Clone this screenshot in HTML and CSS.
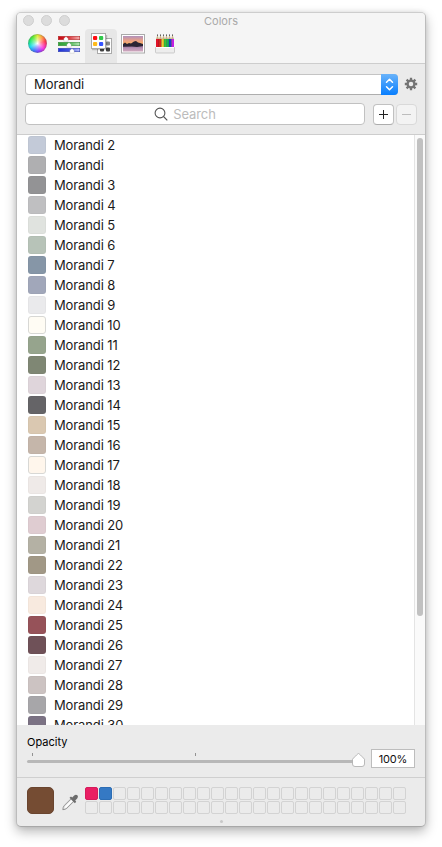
FILE: index.html
```html
<!DOCTYPE html>
<html lang="en">
<head>
<meta charset="utf-8">
<title>Colors</title>
<link rel="stylesheet" href="styles.css">
</head>
<body>
<main class="window">
  <header class="titlebar">
    <div class="title-row">
      <div class="lights"><i></i><i></i><i></i></div>
      <h1>Colors</h1>
    </div>
    <nav class="tabs">
      <div class="tab"><span class="wheel"></span></div>
      <div class="tab">
        <svg width="24" height="22" viewBox="0 0 24 22">
          <defs>
            <linearGradient id="r"><stop offset="0" stop-color="#c80812"/><stop offset=".4" stop-color="#d62028"/><stop offset="1" stop-color="#f4b4b2"/></linearGradient>
            <linearGradient id="g"><stop offset="0" stop-color="#2f9e38"/><stop offset=".5" stop-color="#45b44c"/><stop offset="1" stop-color="#b8e6b8"/></linearGradient>
            <linearGradient id="b"><stop offset="0" stop-color="#2033d4"/><stop offset=".5" stop-color="#4254e0"/><stop offset="1" stop-color="#b8c0fa"/></linearGradient>
          </defs>
          <rect x="1.300" y="3.300" width="21.400" height="3.400" fill="url(#r)" stroke="#b32c2c" stroke-width=".6"/>
          <rect x="1.300" y="9.300" width="21.400" height="3.400" fill="url(#g)" stroke="#3c9040" stroke-width=".6"/>
          <rect x="1.300" y="15.300" width="21.400" height="3.400" fill="url(#b)" stroke="#3444b4" stroke-width=".6"/>
          <g fill="#fff" stroke="#777" stroke-opacity=".5" stroke-width=".4"><path d="M9 3.500l2.200 2V8.200H6.800V5.500z"/><path d="M12 9.500l2.200 2v2.700H9.800v-2.700z"/><path d="M15 15.500l2.200 2v2.700h-4.400v-2.700z"/></g>
        </svg>
      </div>
      <div class="tab selected">
        <svg width="24" height="24" viewBox="0 0 24 24">
          <rect x="8.500" y="5.500" width="14" height="15" fill="#fff" stroke="#aaa"/>
          <g fill="#444"><rect x="11" y="14.500" width="4" height="4" rx="1"/><rect x="17" y="14.500" width="4" height="4" rx="1"/><rect x="17" y="8.500" width="4" height="4" rx="1" fill="#888"/></g>
          <path d="M3 16.500h14.500V2" fill="none" stroke="#000" stroke-opacity=".2" stroke-width="1.500"/>
          <rect x="2.500" y=".5" width="14" height="15" fill="#fff" stroke="#aaa"/>
          <rect x="4" y="3" width="4.200" height="4" rx="1" fill="#ff0d12"/><rect x="10" y="3" width="4.200" height="4" rx="1" fill="#2fc84b"/>
          <rect x="4" y="9" width="4.200" height="4" rx="1" fill="#ffbb1c"/><rect x="10" y="9" width="4.200" height="4" rx="1" fill="#3453ff"/>
        </svg>
      </div>
      <div class="tab">
        <svg width="24" height="22" viewBox="0 0 24 22">
          <defs><linearGradient id="sky" x2="0" y2="1"><stop offset="0" stop-color="#b092bd"/><stop offset=".5" stop-color="#eaa087"/><stop offset="1" stop-color="#ffb45c"/></linearGradient>
          <linearGradient id="sea" x2="0" y2="1"><stop offset="0" stop-color="#75567f"/><stop offset=".45" stop-color="#b891b4"/><stop offset="1" stop-color="#d0a8bd"/></linearGradient></defs>
          <rect x=".5" y="1.500" width="23" height="18.500" fill="#fff" stroke="#aaa"/>
          <rect x="2" y="3" width="20" height="9" fill="url(#sky)"/><rect x="2" y="12" width="20" height="6.500" fill="url(#sea)"/>
          <path d="M2 11l2-1.500 2 1.500 2-1 2 .5 3-2 2-.5 2 1.500 2 .5 3 1v2l-6 1-5-.5-9 .3z" fill="#2b2434"/>
        </svg>
      </div>
      <div class="tab">
        <svg width="22" height="22" viewBox="0 0 22 22">
          <g>
            <path d="M2 14V6l1.500-4L5 6l1.500-4L8 6l1.500-4L11 6l1.500-4L14 6l1.500-4L17 6l1.500-4L20 6v8z" fill="#cbb489"/>
            <rect x="2" y="6" width="3" height="9" fill="#e11428"/><rect x="5" y="6" width="2.500" height="9" fill="#d92a1c"/>
            <rect x="7.500" y="6" width="2.500" height="9" fill="#e8d032"/><rect x="10" y="6" width="2.700" height="9" fill="#35c43d"/>
            <rect x="12.700" y="6" width="2.300" height="9" fill="#12b45c"/><rect x="15" y="6" width="2.500" height="9" fill="#1940cb"/><rect x="17.500" y="6" width="2.500" height="9" fill="#c21fe4"/>
            <path d="M4.700 6v8M7.300 6v8M9.900 6v8M12.500 6v8M15 6v8M17.500 6v8" stroke="#222" stroke-opacity=".4" stroke-width=".6"/>
            <path d="M3.500 1.500v1.300M6.500 1.500v1.300M9.500 1.500v1.300M12.500 1.500v1.300M15.500 1.500v1.300M18.500 1.500v1.300" stroke="#444"/>
          </g>
          <path d="M1.500 14.500h19v4.500q0 1-1 1h-17q-1 0-1-1z" fill="#ededed" stroke="#bbb" stroke-width=".7"/><path d="M2 14.500h18" stroke="#fff"/>
        </svg>
      </div>
    </nav>
  </header>

  <section class="controls">
    <div class="control-row">
      <div class="select"><span>Morandi</span>
        <b><svg width="17" height="21" viewBox="0 0 17 21" fill="none" stroke="#fff" stroke-width="1.500" stroke-linecap="round" stroke-linejoin="round"><path d="M5.500 8.300l3-3 3 3M5.500 12.700l3 3 3-3"/></svg></b>
      </div>
      <svg class="gear" width="14" height="14" viewBox="-7 -7 14 14"><g stroke="#747474" stroke-width="2.300"><path d="M0-6.200V-3M0 6.200V3M-6.200 0H-3M6.200 0H3M-4.400-4.400l2.300 2.300M4.400 4.400L2.100 2.100M-4.400 4.400l2.300-2.300M4.400-4.400L2.100-2.100"/></g><circle r="3.400" fill="none" stroke="#747474" stroke-width="2.300"/></svg>
    </div>
    <div class="control-row">
      <div class="search">
        <svg width="14" height="14" viewBox="0 0 14 14" fill="none" stroke="#555" stroke-width="1.100"><circle cx="6" cy="6" r="4.900"/><path d="M9.500 9.500l3.800 3.800"/></svg>
        <span>Search</span>
      </div>
      <div class="button add"><svg width="9" height="9" viewBox="0 0 9 9"><path d="M4.500 0v9M0 4.500h9" stroke="#222"/></svg></div>
      <div class="button remove"><svg width="9" height="9" viewBox="0 0 9 9"><path d="M0 4.500h9" stroke="#bdbdbd"/></svg></div>
    </div>
  </section>

  <section class="list">
    <ul id="colors"></ul>
    <div class="gutter"><div class="thumb"></div></div>
  </section>

  <section class="opacity">
    <div class="slider">
      <label>Opacity</label>
      <div class="ticks"><i></i><i></i></div>
      <div class="track">
        <svg class="knob" width="15" height="16" viewBox="0 0 15 16"><path d="M7.500 1.500Q8.200 1.500 13.500 7.200V12q0 2.500-2.500 2.500H4Q1.500 14.500 1.500 12V7.200Q6.800 1.500 7.500 1.500z" fill="#fff" stroke="#aaa" stroke-width=".8"/></svg>
      </div>
    </div>
    <div class="percent">100%</div>
  </section>

  <footer class="footer">
    <div class="wells">
      <div class="current"></div>
      <svg class="picker" width="19" height="20" viewBox="0 0 19 20">
        <path d="M10.300 6.500L3.200 13.600Q2 15 1.800 17.700q2.600-.2 4-1.400L13 9.200z" fill="#e8e8e8" stroke="#888" stroke-width=".9"/>
        <path d="M4.200 15.500l7-7" stroke="#fff" stroke-width="1.200"/>
        <path d="M8.500 5.800l1.500-1.300 1.200 1 2-2q1.700-1.500 3.200-.2 1.300 1.500-.2 3.200l-2 2 1 1.200-1.300 1.500z" fill="#6c6c6c"/>
      </svg>
      <div class="cells" id="cells"></div>
    </div>
    <div class="grip"></div>
  </footer>
</main>
<script src="app.js"></script>
</body>
</html>
```
FILE: styles.css
```css
* { box-sizing: border-box; }
html { height: 100%; }
body { margin: 0; min-height: 847px; display: flow-root; background: #fff; font-family: Inter, "Liberation Sans", sans-serif; color: #1a1a1a; }
svg { display: block; flex: none; }
.window {
  width: 410px; height: 815px; margin: 12px 16px 0; display: flex; flex-direction: column;
  border: 1px solid #bcbcbc; border-top-color: #cdcdcd; border-bottom-color: #a8a8a8; border-radius: 5px; overflow: hidden; background: #ebebeb;
  box-shadow: 0 5px 12px rgba(0,0,0,.27), 0 0 5px rgba(0,0,0,.1);
}
.titlebar { height: 51px; flex: none; background: #f5f5f5; border-bottom: 1px solid #cdcdcd; }
.title-row { height: 16px; display: grid; grid-template-columns: 60px 1fr 60px; align-items: center; }
.lights { display: flex; gap: 7px; padding-left: 6px; margin-top: -1px; }
.lights i { width: 11px; height: 11px; flex: none; border-radius: 50%; background: #dcdcdc; border: 1px solid #cecece; }
h1 { margin: 0; text-align: center; font-size: 11px; font-weight: 400; color: #a9a9a9; line-height: 16px; letter-spacing: .05px; }
.tabs { display: flex; padding-left: 4px; height: 34px; }
.tab { width: 32px; height: 34px; display: flex; justify-content: center; padding-top: 4px; flex: none; }
.tab.selected { background: #e7e7e7; border-radius: 4px 4px 0 0; }
.wheel {
  width: 19px; height: 19px; margin: 1px 0 0 1px; border-radius: 50%; border: 1px solid rgba(110,110,110,.35);
  background: radial-gradient(circle, #fff 0, rgba(255,255,255,.55) 22%, rgba(255,255,255,0) 60%), conic-gradient(#dced34, #ff9a38 35deg, #ff3048 75deg, #f62de1 130deg, #8b35ff 165deg, #3a72ff 205deg, #14d9f0 245deg, #18e878 285deg, #55e62d 325deg, #dced34);
  background-origin: border-box;
}
.controls { height: 71px; flex: none; padding: 10px 8px 0; border-bottom: 1px solid #cdcdcd; display: flex; flex-direction: column; gap: 8px; }
.control-row { display: flex; align-items: center; }
.select { width: 373px; height: 21px; flex: none; display: flex; justify-content: space-between; background: #fff; border: 1px solid #c4c4c4; border-bottom-color: #aeaeae; border-radius: 4px; font-size: 13px; line-height: 19px; padding-left: 8px; letter-spacing: -.05px; }
.select b { margin: -1px; width: 17px; height: 21px; border-radius: 0 4px 4px 0; background: linear-gradient(#69b3fa, #087efe); }
.gear { margin-left: 6px; margin-top: -1px; }
.search { width: 340px; height: 22px; display: flex; justify-content: center; align-items: center; gap: 5px; background: #fff; border: 1px solid #c1c1c1; border-radius: 4px; color: #bcbcbc; font-size: 13px; line-height: 20px; padding-right: 20px; letter-spacing: -.1px; }
.button { width: 21px; height: 21px; display: grid; place-items: center; border-radius: 4px; border: 1px solid #c1c1c1; border-bottom-color: #acacac; background: #fff; }
.add { margin-left: 8px; }
.remove { margin-left: 2px; background: #f3f3f3; border-color: #d9d9d9; }
.list { height: 590px; flex: none; display: flex; background: #fff; overflow: hidden; }
.list ul { flex: 1; margin: 0; padding: 0 0 0 11px; list-style: none; }
.list li { height: 20px; display: flex; align-items: center; gap: 8px; font-size: 13px; line-height: 20px; letter-spacing: -.12px; }
.swatch { width: 18px; height: 18px; border-radius: 3px; border: 1px solid rgba(0,0,0,.025); }
.swatch.pale { border-color: #d8d8d5; }
.gutter { width: 11px; border-left: 1px solid #e4e4e4; background: #fafafa; padding: 3px 0 0 2px; }
.thumb { width: 6px; height: 478px; border-radius: 3px; background: #c1c1c1; }
.opacity { height: 53px; flex: none; border-bottom: 1px solid #cfcfcf; padding-left: 10px; display: flex; }
.slider { width: 338px; padding-top: 10px; font-size: 11px; color: #000; }
.slider label { display: block; line-height: 14px; height: 18px; }
.ticks { display: flex; gap: 162px; padding-left: 5px; height: 3px; }
.ticks i { width: 1px; height: 3px; background: #929292; }
.track { height: 3px; width: 330px; margin-top: 4px; border-radius: 2px; background: #b8b8b8; position: relative; }
.knob { position: absolute; left: 324px; top: -8px; }
.percent { width: 44px; height: 19px; margin: 24px 0 0 6px; background: #fff; border: 1px solid #bdbdbd; font-size: 11px; line-height: 18px; text-align: center; color: #111; letter-spacing: -.15px; }
.footer { height: 48px; padding: 9px 0 0 10px; }
.wells { display: flex; }
.current { width: 27px; height: 27px; border-radius: 5px; background: #754c33; border: 1px solid #6a452f; }
.picker { margin: 5px 5px 0 7px; }
.cells { display: grid; grid-template-columns: repeat(23, 13px); gap: 1px; }
.cell { height: 13px; border: 1px solid #d3d3d3; border-radius: 2px; }
.cell.pink { background: #e91e63; border-color: #d51b5b; }
.cell.blue { background: #3579c4; border-color: #2c6db4; }
.grip { width: 3px; height: 3px; border-radius: 50%; background: #c8c8c8; margin: 6px 0 0 193px; }
```
FILE: app.js
```js
const colors = [
  ["Morandi 2", "#c3cad8"], ["Morandi", "#afafb1"], ["Morandi 3", "#939395"], ["Morandi 4", "#bfbfc1"],
  ["Morandi 5", "#e0e3df"], ["Morandi 6", "#b7c3b8"], ["Morandi 7", "#8696a7"], ["Morandi 8", "#a1a7ba"],
  ["Morandi 9", "#eaeaec"], ["Morandi 10", "#fffcf4"], ["Morandi 11", "#96a48d"], ["Morandi 12", "#7f8774"],
  ["Morandi 13", "#dfd5db"], ["Morandi 14", "#656467"], ["Morandi 15", "#dac8b1"], ["Morandi 16", "#c5b6aa"],
  ["Morandi 17", "#fff6ec"], ["Morandi 18", "#efeae8"], ["Morandi 19", "#d3d3d0"], ["Morandi 20", "#dfccd1"],
  ["Morandi 21", "#b4b1a4"], ["Morandi 22", "#a19886"], ["Morandi 23", "#ded8dc"], ["Morandi 24", "#f8eadf"],
  ["Morandi 25", "#965259"], ["Morandi 26", "#6f5158"], ["Morandi 27", "#f0ebe9"], ["Morandi 28", "#ccc3c2"],
  ["Morandi 29", "#a7a6a9"], ["Morandi 30", "#7b7284"]
];
const pale = ["Morandi 10", "Morandi 17"];
document.getElementById("colors").innerHTML = colors.map(([name, value]) =>
  `<li><span class="swatch${pale.includes(name) ? " pale" : ""}" style="background-color:${value}"></span><span>${name}</span></li>`).join("");
document.getElementById("cells").innerHTML = Array.from({ length: 46 }, (_, i) =>
  `<div class="cell${i === 0 ? " pink" : i === 1 ? " blue" : ""}"></div>`).join("");
```
